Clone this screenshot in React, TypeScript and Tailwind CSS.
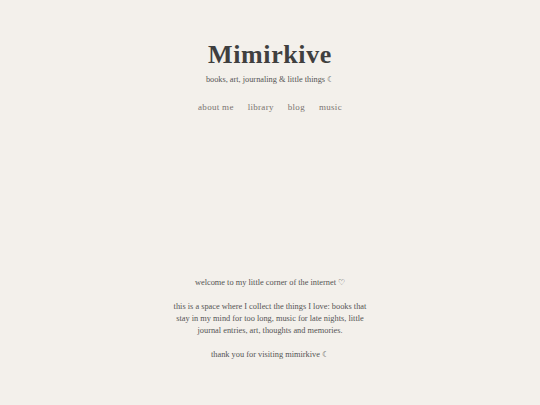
export default function App() {
  return (
    <div className="min-h-[405px] w-full bg-[#f3f0eb] font-['Liberation_Serif',Georgia,serif] text-[#4a4a4a]">
      <header className="flex flex-col items-center pt-[40px]">
        <h1 className="text-[26px] font-bold leading-[30px] tracking-[0.6px] text-[#3f3f3f]">Mimirkive</h1>
        <p className="mt-[4px] text-[8.3px] leading-[12px] text-[#555]">books, art, journaling &amp; little things ☾</p>
        <nav className="mt-[15px] flex gap-[14px] text-[9px] leading-[12px] tracking-[0.3px] text-[#7a7470]">
          <a>about me</a>
          <a>library</a>
          <a>blog</a>
          <a>music</a>
        </nav>
      </header>
      <main className="mx-auto mt-[164px] w-[200px] text-center text-[8.35px] leading-[12px] text-[#555]">
        <p>welcome to my little corner of the internet ♡</p>
        <p className="mt-[12px]">
          this is a space where I collect the things I love: books that stay in my mind for too long, music for late nights, little journal entries, art, thoughts and memories.
        </p>
        <p className="mt-[12px]">thank you for visiting mimirkive ☾</p>
      </main>
    </div>
  )
}
